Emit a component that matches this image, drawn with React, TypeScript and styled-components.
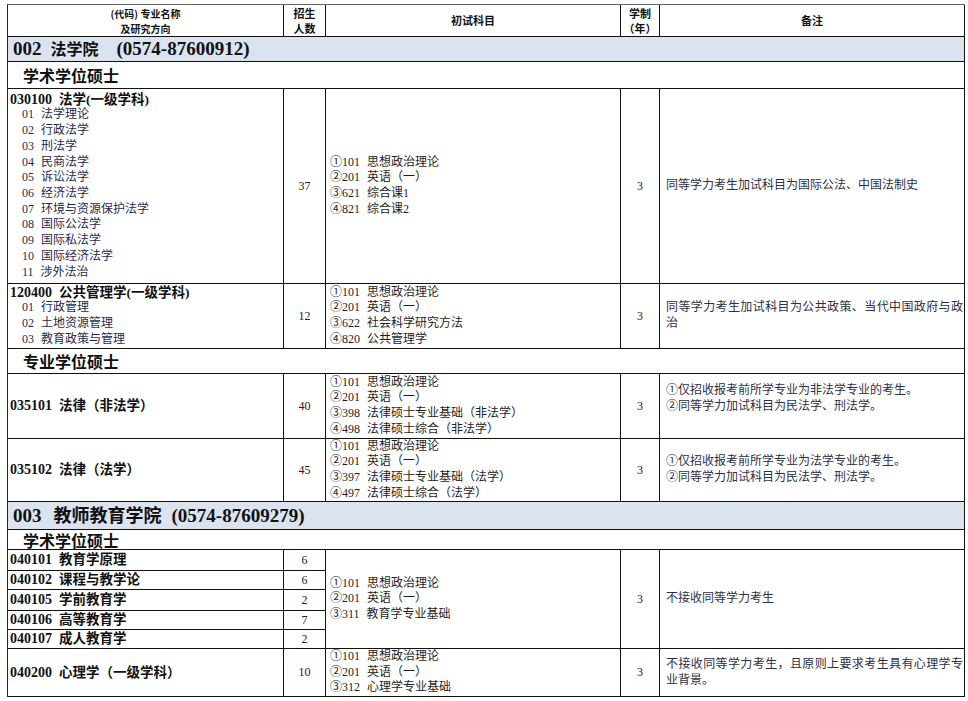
import React from "react";
import styled, { createGlobalStyle } from "styled-components";

const Global = createGlobalStyle`
  html, body { margin: 0; padding: 0; background: #fff; }
  body { font-family: "Liberation Serif", "Noto Sans CJK SC", serif; }
`;

const Page = styled.div`
  padding: 4px 0 0 7px;
`;

const Grid = styled.div`
  display: grid;
  width: max-content;
  grid-template-columns: 276px 42px 295px 39px 305px;
  grid-template-rows: 32px 25px 27px 195px 65px 25px 65px 63px 28px 20px 21px 19px 21px 19px 19px 48px;
  border-top: 1px solid #666;
  border-left: 1px solid #222;
  color: #222;
`;

const Cell = styled.div<{ $rows?: number }>`
  box-sizing: border-box;
  border-right: 1px solid #111;
  border-bottom: 1px solid #111;
  display: flex;
  flex-direction: column;
  justify-content: center;
  min-width: 0;
  ${(p) => (p.$rows ? `grid-row: span ${p.$rows};` : "")}
`;

const HeadCell = styled(Cell)<{ $size?: number }>`
  align-items: center;
  text-align: center;
  font-family: "Noto Sans CJK SC", sans-serif;
  font-weight: 700;
  font-size: ${(p) => p.$size ?? 11}px;
  line-height: 15px;
  color: #111;
`;

const DeptCell = styled(Cell)`
  grid-column: 1 / -1;
  background: #dbe3ef;
  padding-left: 5px;
  color: #111;
`;

const DeptTitle = styled.div`
  font-weight: 700;
  font-size: 19px;
  line-height: 22px;
  white-space: nowrap;
`;

const DeptHan = styled.span<{ $size: number; $before: number; $after: number }>`
  font-size: ${(p) => p.$size}px;
  margin: 0 ${(p) => p.$after}px 0 ${(p) => p.$before}px;
`;

const SectionCell = styled(Cell)`
  grid-column: 1 / -1;
  padding-left: 15px;
  font-family: "Noto Sans CJK SC", sans-serif;
  font-weight: 700;
  font-size: 16px;
  line-height: 20px;
  color: #111;
`;

const MajorCell = styled(Cell)`
  padding-left: 2px;
  line-height: 15.7px;
  font-size: 12px;
  white-space: nowrap;
`;

const MajorTitle = styled.div`
  font-weight: 700;
  font-size: 14px;
  color: #111;
`;

const MajorCode = styled.span`
  margin-right: 7px;
`;

const MajorName = styled.span`
  font-size: 13.5px;
`;

const DirItem = styled.div`
  padding-left: 12px;
  color: #1f2b4d;
`;

const DirCode = styled.span`
  display: inline-block;
  margin-right: 7px;
`;

const CenterCell = styled(Cell)`
  align-items: center;
  font-size: 12px;
  color: #222;
`;

const SubjectCell = styled(Cell)`
  padding-left: 4px;
  font-size: 12px;
  line-height: 15.6px;
  color: #1e1e1e;
  white-space: nowrap;
`;

const SubjectNum = styled.span`
  margin-right: 7px;
`;

const RemarkCell = styled(Cell)<{ $lift?: number }>`
  padding: 0 1px ${(p) => p.$lift ?? 0}px 6px;
  font-size: 12px;
  line-height: 15.6px;
  color: #2b3046;
`;

const RemarkLine = styled.div<{ $fill?: boolean }>`
  white-space: nowrap;
  ${(p) =>
    p.$fill
      ? "white-space: normal; text-align: justify; text-align-last: justify;"
      : ""}
`;

type Subj = [string, string];

const Subjects = ({ items, rows }: { items: Subj[]; rows?: number }) => (
  <SubjectCell $rows={rows}>
    {items.map(([n, t]) => (
      <div key={n}>
        <SubjectNum>{n}</SubjectNum>
        {t}
      </div>
    ))}
  </SubjectCell>
);

const Major = ({ code, name, dirs }: { code: string; name: string; dirs?: string[] }) => (
  <MajorCell>
    <MajorTitle>
      <MajorCode>{code}</MajorCode>
      <MajorName>{name}</MajorName>
    </MajorTitle>
    {dirs?.map((d, i) => (
      <DirItem key={d}>
        <DirCode>{String(i + 1).padStart(2, "0")}</DirCode>
        {d}
      </DirItem>
    ))}
  </MajorCell>
);

const lawDirs = [
  "法学理论",
  "行政法学",
  "刑法学",
  "民商法学",
  "诉讼法学",
  "经济法学",
  "环境与资源保护法学",
  "国际公法学",
  "国际私法学",
  "国际经济法学",
  "涉外法治",
];

const common: Subj[] = [
  ["①101", "思想政治理论"],
  ["②201", "英语（一）"],
];

const eduMajors: [string, string, string][] = [
  ["040101", "教育学原理", "6"],
  ["040102", "课程与教学论", "6"],
  ["040105", "学前教育学", "2"],
  ["040106", "高等教育学", "7"],
  ["040107", "成人教育学", "2"],
];

export default function App() {
  return (
    <>
      <Global />
      <Page>
        <Grid>
          <HeadCell $size={10}>
            <div>(代码) 专业名称</div>
            <div>及研究方向</div>
          </HeadCell>
          <HeadCell $size={11}>
            <div>招生</div>
            <div>人数</div>
          </HeadCell>
          <HeadCell>初试科目</HeadCell>
          <HeadCell>
            <div>学制</div>
            <div>（年）</div>
          </HeadCell>
          <HeadCell>备注</HeadCell>

          <DeptCell>
            <DeptTitle>
              002
              <DeptHan $size={16} $before={9} $after={18}>法学院</DeptHan>
              (0574-87600912)
            </DeptTitle>
          </DeptCell>
          <SectionCell>学术学位硕士</SectionCell>

          <Major code="030100" name="法学(一级学科)" dirs={lawDirs} />
          <CenterCell>37</CenterCell>
          <Subjects items={[...common, ["③621", "综合课1"], ["④821", "综合课2"]]} />
          <CenterCell>3</CenterCell>
          <RemarkCell>
            <RemarkLine>同等学力考生加试科目为国际公法、中国法制史</RemarkLine>
          </RemarkCell>

          <Major code="120400" name="公共管理学(一级学科)" dirs={["行政管理", "土地资源管理", "教育政策与管理"]} />
          <CenterCell>12</CenterCell>
          <Subjects items={[...common, ["③622", "社会科学研究方法"], ["④820", "公共管理学"]]} />
          <CenterCell>3</CenterCell>
          <RemarkCell>
            <RemarkLine $fill>同等学力考生加试科目为公共政策、当代中国政府与政</RemarkLine>
            <RemarkLine>治</RemarkLine>
          </RemarkCell>

          <SectionCell>专业学位硕士</SectionCell>

          <Major code="035101" name="法律（非法学）" />
          <CenterCell>40</CenterCell>
          <Subjects
            items={[...common, ["③398", "法律硕士专业基础（非法学）"], ["④498", "法律硕士综合（非法学）"]]}
          />
          <CenterCell>3</CenterCell>
          <RemarkCell $lift={14}>
            <RemarkLine>①仅招收报考前所学专业为非法学专业的考生。</RemarkLine>
            <RemarkLine>②同等学力加试科目为民法学、刑法学。</RemarkLine>
          </RemarkCell>

          <Major code="035102" name="法律（法学）" />
          <CenterCell>45</CenterCell>
          <Subjects
            items={[...common, ["③397", "法律硕士专业基础（法学）"], ["④497", "法律硕士综合（法学）"]]}
          />
          <CenterCell>3</CenterCell>
          <RemarkCell>
            <RemarkLine>①仅招收报考前所学专业为法学专业的考生。</RemarkLine>
            <RemarkLine>②同等学力加试科目为民法学、刑法学。</RemarkLine>
          </RemarkCell>

          <DeptCell>
            <DeptTitle>
              003
              <DeptHan $size={18} $before={12} $after={10}>教师教育学院</DeptHan>
              (0574-87609279)
            </DeptTitle>
          </DeptCell>
          <SectionCell>学术学位硕士</SectionCell>

          {eduMajors.slice(0, 1).map(([c, n, k]) => (
            <React.Fragment key={c}>
              <Major code={c} name={n} />
              <CenterCell>{k}</CenterCell>
            </React.Fragment>
          ))}
          <Subjects rows={5} items={[...common, ["③311", "教育学专业基础"]]} />
          <CenterCell $rows={5}>3</CenterCell>
          <RemarkCell $rows={5}>
            <RemarkLine>不接收同等学力考生</RemarkLine>
          </RemarkCell>
          {eduMajors.slice(1).map(([c, n, k]) => (
            <React.Fragment key={c}>
              <Major code={c} name={n} />
              <CenterCell>{k}</CenterCell>
            </React.Fragment>
          ))}

          <Major code="040200" name="心理学（一级学科）" />
          <CenterCell>10</CenterCell>
          <Subjects items={[...common, ["③312", "心理学专业基础"]]} />
          <CenterCell>3</CenterCell>
          <RemarkCell>
            <RemarkLine $fill>不接收同等学力考生，且原则上要求考生具有心理学专</RemarkLine>
            <RemarkLine>业背景。</RemarkLine>
          </RemarkCell>
        </Grid>
      </Page>
    </>
  );
}
